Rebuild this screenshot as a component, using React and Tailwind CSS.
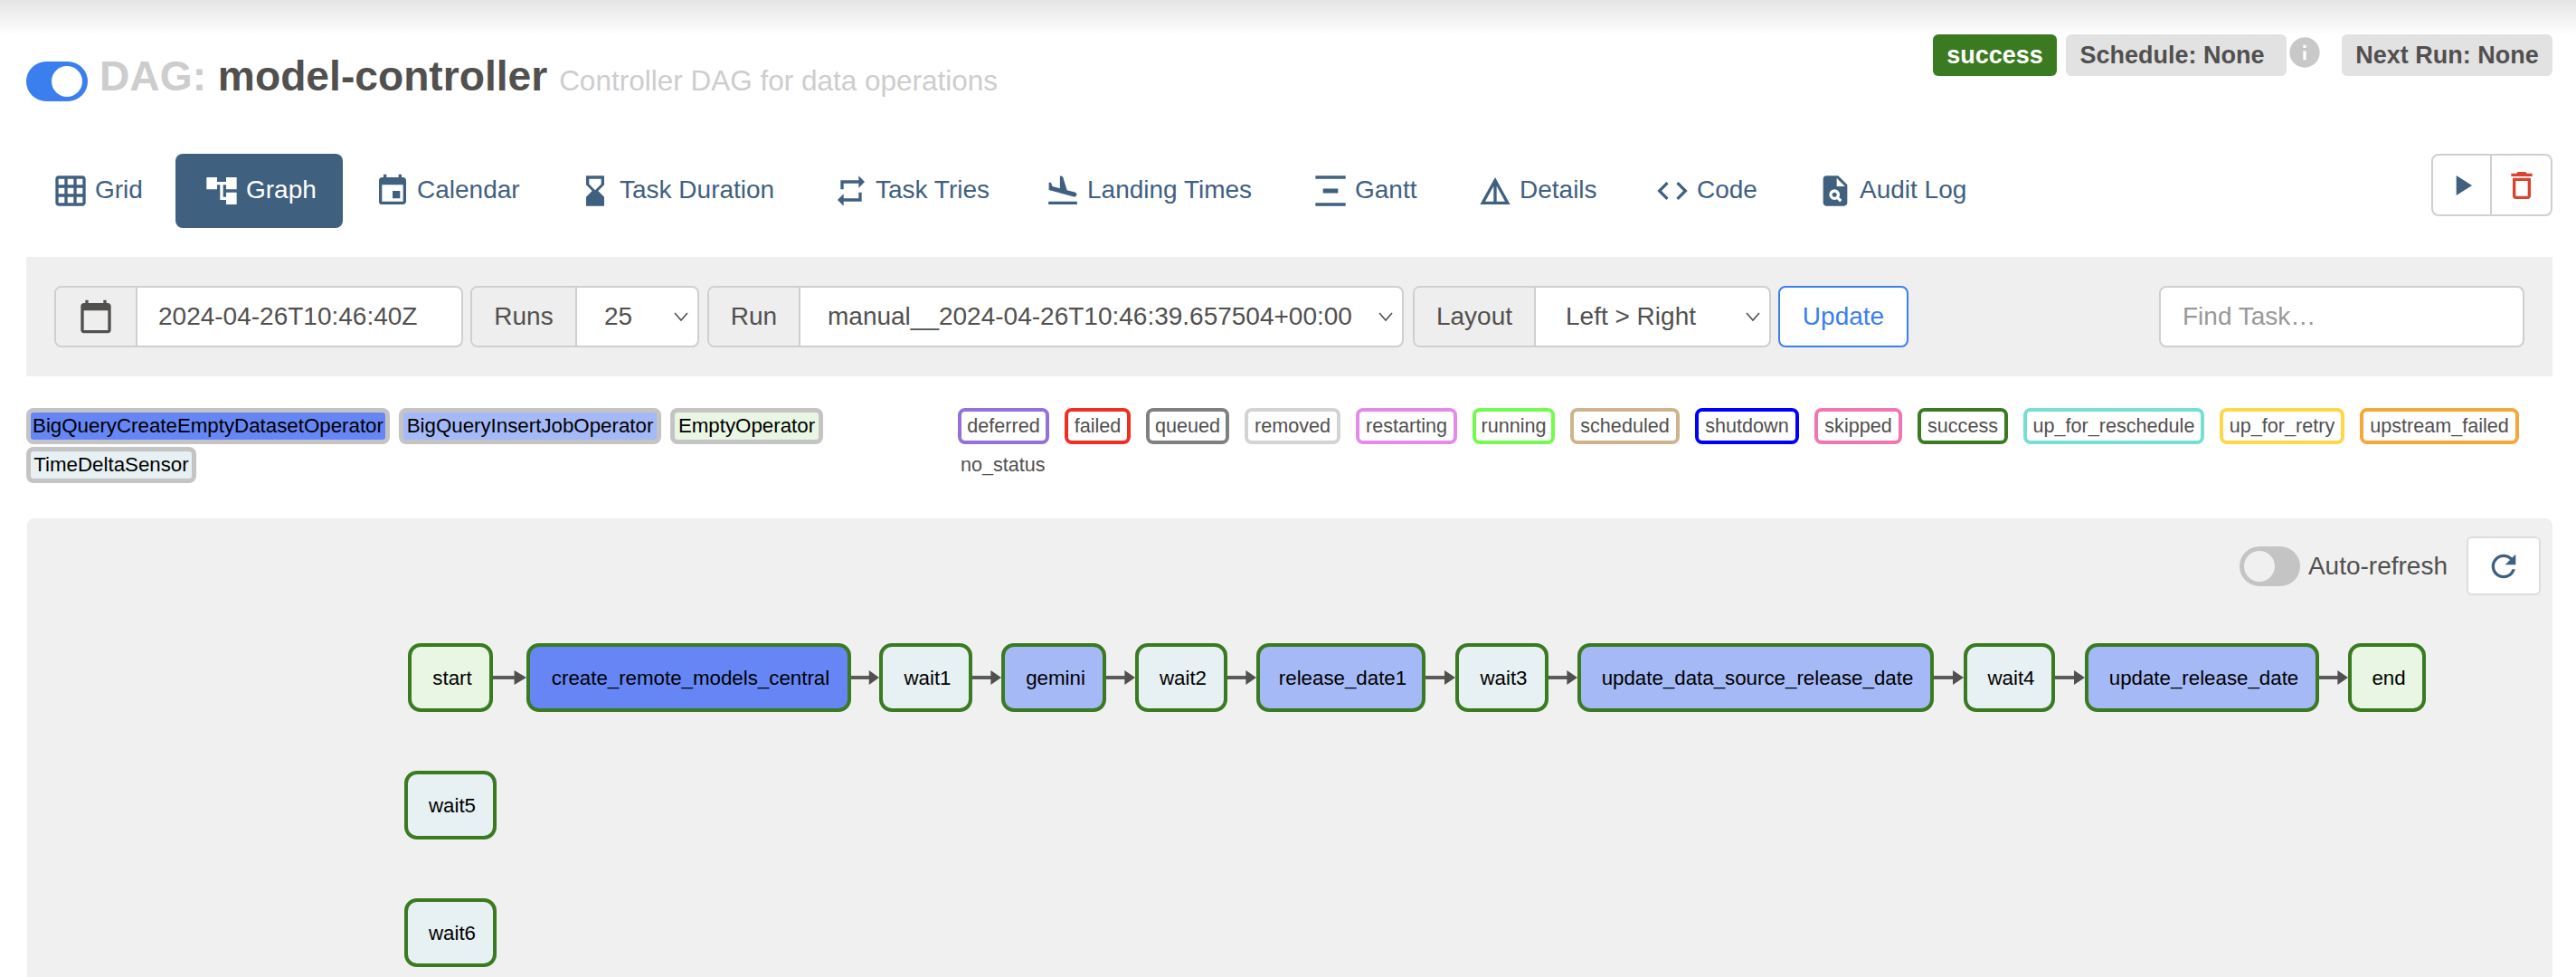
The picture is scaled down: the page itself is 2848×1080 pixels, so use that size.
import React from "react";
import {
  MdGridOn, MdAccountTree, MdEvent, MdHourglassBottom, MdRepeat, MdFlightLand, MdVerticalDistribute,
  MdDetails, MdCode, MdPlagiarism, MdPlayArrow, MdDeleteOutline, MdRefresh, MdInfo, MdCalendarToday,
} from "react-icons/md";

const nav = [
  ["Grid", MdGridOn, "w-[167px]"],
  ["Graph", MdAccountTree, "w-[185px] mr-[4px]"],
  ["Calendar", MdEvent, "w-[224px]"],
  ["Task Duration", MdHourglassBottom, "w-[283px]"],
  ["Task Tries", MdRepeat, "w-[234px]"],
  ["Landing Times", MdFlightLand, "w-[296px]"],
  ["Gantt", MdVerticalDistribute, "w-[182px]"],
  ["Details", MdDetails, "w-[196px]"],
  ["Code", MdCode, "w-[180px]"],
  ["Audit Log", MdPlagiarism, "w-[200px]"],
];

const ops = [
  ["BigQueryCreateEmptyDatasetOperator", "bg-[#6686f6]", "w-[402px]"],
  ["BigQueryInsertJobOperator", "bg-[#a5b9f7]", "w-[290px]"],
  ["EmptyOperator", "bg-[#e9f6e4]", "w-[169px]"],
  ["TimeDeltaSensor", "bg-[#e7f0f2]", "w-[188px]"],
];

const states = [
  ["deferred", "border-[#9370db]", "w-[101px]"],
  ["failed", "border-[#f22d22]", "w-[73px]"],
  ["queued", "border-[#808080]", "w-[92px]"],
  ["removed", "border-[#d3d3d3]", "w-[106px]"],
  ["restarting", "border-[#e48ae8]", "w-[112px]"],
  ["running", "border-[#72fb4f]", "w-[91px]"],
  ["scheduled", "border-[#cdb48c]", "w-[121px]"],
  ["shutdown", "border-[#0000ff]", "w-[115px]"],
  ["skipped", "border-[#f076b0]", "w-[97px]"],
  ["success", "border-[#3a7a20]", "w-[100px]"],
  ["up_for_reschedule", "border-[#76dfd3]", "w-[200px]"],
  ["up_for_retry", "border-[#fdd745]", "w-[138px]"],
  ["upstream_failed", "border-[#f5a837]", "w-[176px]"],
];

const row = [
  ["start", "bg-[#e9f6e4]", "w-[94px]", ""],
  ["create_remote_models_central", "bg-[#6686f6]", "w-[359px]", "w-[37px]"],
  ["wait1", "bg-[#e7f0f2]", "w-[103px]", "w-[31px]"],
  ["gemini", "bg-[#a5b9f7]", "w-[116px]", "w-[32px]"],
  ["wait2", "bg-[#e7f0f2]", "w-[102px]", "w-[32px]"],
  ["release_date1", "bg-[#a5b9f7]", "w-[187px]", "w-[32px]"],
  ["wait3", "bg-[#e7f0f2]", "w-[103px]", "w-[33px]"],
  ["update_data_source_release_date", "bg-[#a5b9f7]", "w-[394px]", "w-[32px]"],
  ["wait4", "bg-[#e7f0f2]", "w-[101px]", "w-[33px]"],
  ["update_release_date", "bg-[#a5b9f7]", "w-[259px]", "w-[33px]"],
  ["end", "bg-[#e9f6e4]", "w-[86px]", "w-[32px]"],
];

function Node({ label, bg, w }) {
  return (
    <div className={`flex h-[76px] ${w} shrink-0 items-center justify-center rounded-[14px] border-[4px] border-[#3a7a20] ${bg} pl-[4px] pt-[2px] text-[22.3px] text-black`}>
      {label}
    </div>
  );
}

function Arrow({ w }) {
  return (
    <svg className={`${w} h-[16px] shrink-0`} viewBox="0 0 33 16" preserveAspectRatio="none">
      <rect x="0" y="6" width="26" height="4" fill="#5c5b5a" />
      <path d="M21 0 L33 8 L21 16 Z" fill="#51504f" />
    </svg>
  );
}

function Chevron() {
  return (
    <svg className="absolute right-[8px] top-1/2 h-[14px] w-[20px] -translate-y-1/2" viewBox="0 0 20 14" fill="none" stroke="#51504f" strokeWidth="1.6">
      <path d="M3 3 L10 11 L17 3" />
    </svg>
  );
}

function Group({ label, value, cls, labelW, select, pl }) {
  return (
    <div className={`flex h-[68px] ${cls} overflow-hidden rounded-[8px] border-2 border-[#cfcfcf] bg-white`}>
      <div className={`flex ${labelW} shrink-0 items-center justify-center border-r-2 border-[#cfcfcf] bg-[#eeeeee] text-[28px] text-[#51504f]`}>
        {label}
      </div>
      <div className={`relative flex flex-1 items-center whitespace-nowrap ${pl} text-[28px] text-[#51504f]`}>
        {value}
        {select && <Chevron />}
      </div>
    </div>
  );
}

export default function App() {
  return (
    <div className="relative h-[1080px] w-[2848px] overflow-hidden bg-white font-['Liberation_Sans',Arial,sans-serif]">
      <div className="h-[38px] bg-gradient-to-b from-[#e4e4e4] to-white" />

      <div className="flex h-[46px] items-start justify-end pr-[26px]">
        <div className="flex h-[46px] w-[137px] items-center justify-center rounded-[6px] bg-[#3a7a20] text-[27px] font-bold text-white">success</div>
        <div className="ml-[10px] flex h-[46px] w-[244px] items-center justify-center rounded-[6px] bg-[#e2e2e2] pr-[9px] text-[27px] font-bold text-[#51504f]">Schedule: None</div>
        <MdInfo className="text-[#c8c8c8]" size={40} />
        <div className="ml-[21px] flex h-[46px] w-[233px] items-center justify-center rounded-[6px] bg-[#e2e2e2] text-[27px] font-bold text-[#51504f]">Next Run: None</div>
      </div>

      <div className="-mt-[16px] flex h-[44px] items-center pl-[29px]">
        <div className="flex h-[44px] w-[68px] items-center justify-end rounded-full bg-[#3b7fef] pr-[6px]">
          <div className="h-[34px] w-[34px] rounded-full bg-white" />
        </div>
        <h1 className="-mt-[11px] ml-[13px] whitespace-nowrap text-[46.2px] font-bold leading-none text-[#51504f]">
          <span className="text-[#cdcdcd]">DAG:</span> model-controller{" "}
          <small className="text-[31.5px] font-normal text-[#cdcdcd]">Controller DAG for data operations</small>
        </h1>
      </div>

      <div className="mt-[58px] flex h-[82px] items-start justify-between pl-[27px] pr-[26px]">
        <div className="flex items-center">
          {nav.map(([label, Icon, w]) => {
            const active = label === "Graph";
            return (
              <div key={label} className={`flex h-[82px] ${w} shrink-0 items-center whitespace-nowrap rounded-[8px] pl-[31px] text-[28px] ${active ? "bg-[#406080] text-white" : "text-[#406080]"}`}>
                <span className="w-[47px] shrink-0"><Icon size={40} /></span>
                <span className="-mt-[3px]">{label}</span>
              </div>
            );
          })}
        </div>
        <div className="flex h-[69px] w-[134px] overflow-hidden rounded-[8px] border-2 border-[#cfcfcf]">
          <div className="flex w-[65px] items-center justify-center border-r-2 border-[#cfcfcf] text-[#406080]"><MdPlayArrow size={38} /></div>
          <div className="flex flex-1 items-center justify-center text-[#d9432f]"><MdDeleteOutline size={40} /></div>
        </div>
      </div>

      <div className="ml-[29px] mr-[26px] mt-[32px] flex h-[132px] items-center bg-[#efefef] pl-[31px] pr-[31px]">
        <div className="flex h-[68px] w-[452px] overflow-hidden rounded-[8px] border-2 border-[#cfcfcf] bg-white">
          <div className="flex w-[90px] shrink-0 items-center justify-center border-r-2 border-[#cfcfcf] bg-[#eeeeee] text-[#51504f]"><MdCalendarToday size={40} /></div>
          <div className="flex flex-1 items-center pl-[23px] text-[28px] text-[#51504f]">2024-04-26T10:46:40Z</div>
        </div>
        <Group label="Runs" value="25" cls="ml-[8px] w-[253px]" labelW="w-[116px]" pl="pl-[30px]" select />
        <Group label="Run" value="manual__2024-04-26T10:46:39.657504+00:00" cls="ml-[9px] w-[770px]" labelW="w-[101px]" pl="pl-[30px]" select />
        <Group label="Layout" value="Left > Right" cls="ml-[10px] w-[396px]" labelW="w-[134px]" pl="pl-[33px]" select />
        <div className="ml-[8px] flex h-[68px] w-[144px] items-center justify-center rounded-[8px] border-2 border-[#3b7fef] bg-white text-[28px] text-[#3b7fef]">Update</div>
        <div className="ml-auto flex h-[68px] w-[404px] items-center rounded-[8px] border-2 border-[#cfcfcf] bg-white pl-[24px] text-[28px] text-[#999999]">Find Task…</div>
      </div>

      <div className="mt-[35px] flex h-[84px] pl-[29px]">
        <div className="flex w-[1030px] shrink-0 flex-wrap content-start gap-x-[10px] gap-y-[3px]">
          {ops.map(([label, bg, w]) => (
            <div key={label} className={`flex h-[40px] ${w} shrink-0 items-center justify-center whitespace-nowrap rounded-[8px] border-[5px] border-[#c4c4c4] ${bg} text-[22.3px] text-black`}>
              {label}
            </div>
          ))}
          <div className="w-[700px]" />
        </div>
        <div className="flex flex-wrap content-start gap-x-[17px] gap-y-[3px]">
          {states.map(([label, b, w]) => (
            <div key={label} className={`flex h-[40px] ${w} shrink-0 items-center justify-center whitespace-nowrap rounded-[8px] border-[4px] ${b} bg-white text-[21.6px] text-[#51504f]`}>
              {label}
            </div>
          ))}
          <div className="flex h-[40px] items-center pl-[3px] text-[21.6px] text-[#51504f]">no_status</div>
        </div>
      </div>

      <div className="ml-[30px] mr-[26px] mt-[38px] h-[520px] rounded-t-[8px] bg-[#f0f0f0] pt-[20px]">
        <div className="flex h-[65px] items-center justify-end pr-[13px]">
          <div className="flex h-[44px] w-[67px] items-center rounded-full bg-[#c4c4c4] pl-[5px]">
            <div className="h-[34px] w-[34px] rounded-full bg-[#f0f0f0]" />
          </div>
          <span className="ml-[9px] text-[28px] text-[#51504f]">Auto-refresh</span>
          <div className="ml-[21px] flex h-[65px] w-[82px] items-center justify-center rounded-[6px] border-2 border-[#dddddd] bg-white text-[#406080]"><MdRefresh size={40} /></div>
        </div>

        <div className="mt-[53px] flex flex-col gap-[65px] pl-[417px]">
          <div className="flex items-center pl-[4px]">
            {row.map(([label, bg, w, aw], i) => (
              <React.Fragment key={label}>
                {i > 0 && <Arrow w={aw} />}
                <Node label={label} bg={bg} w={w} />
              </React.Fragment>
            ))}
          </div>
          <Node label="wait5" bg="bg-[#e7f0f2]" w="w-[102px]" />
          <Node label="wait6" bg="bg-[#e7f0f2]" w="w-[102px]" />
        </div>
      </div>
    </div>
  );
}
